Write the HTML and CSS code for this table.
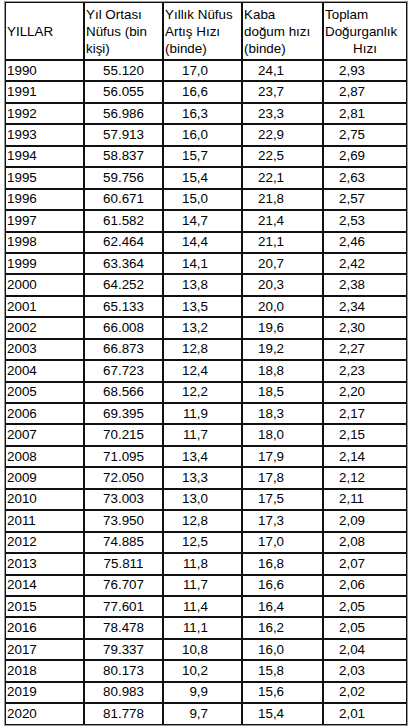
FILE: index.html
```html
<!DOCTYPE html>
<html lang="tr">
<head>
<meta charset="utf-8">
<link rel="stylesheet" href="styles.css">
</head>
<body>
<table class="data">
<colgroup>
<col class="c1"><col class="c2"><col class="c3"><col class="c4"><col class="c5">
</colgroup>
<thead>
<tr class="head">
<td class="h-year">YILLAR</td>
<td class="h-top">Yıl Ortası<br>Nüfus (bin<br>kişi)</td>
<td class="h-top">Yıllık Nüfus<br>Artış Hızı<br>(binde)</td>
<td class="h-top">Kaba<br>doğum hızı<br>(binde)</td>
<td class="h-top">Toplam<br>Doğurganlık<br><span class="center">Hızı</span></td>
</tr>
</thead>
<tbody>
<tr><td class="y">1990</td><td class="pop">55.120</td><td class="gr">17,0</td><td class="cb">24,1</td><td class="tf">2,93</td></tr>
<tr><td class="y">1991</td><td class="pop">56.055</td><td class="gr">16,6</td><td class="cb">23,7</td><td class="tf">2,87</td></tr>
<tr><td class="y">1992</td><td class="pop">56.986</td><td class="gr">16,3</td><td class="cb">23,3</td><td class="tf">2,81</td></tr>
<tr><td class="y">1993</td><td class="pop">57.913</td><td class="gr">16,0</td><td class="cb">22,9</td><td class="tf">2,75</td></tr>
<tr><td class="y">1994</td><td class="pop">58.837</td><td class="gr">15,7</td><td class="cb">22,5</td><td class="tf">2,69</td></tr>
<tr><td class="y">1995</td><td class="pop">59.756</td><td class="gr">15,4</td><td class="cb">22,1</td><td class="tf">2,63</td></tr>
<tr><td class="y">1996</td><td class="pop">60.671</td><td class="gr">15,0</td><td class="cb">21,8</td><td class="tf">2,57</td></tr>
<tr><td class="y">1997</td><td class="pop">61.582</td><td class="gr">14,7</td><td class="cb">21,4</td><td class="tf">2,53</td></tr>
<tr><td class="y">1998</td><td class="pop">62.464</td><td class="gr">14,4</td><td class="cb">21,1</td><td class="tf">2,46</td></tr>
<tr><td class="y">1999</td><td class="pop">63.364</td><td class="gr">14,1</td><td class="cb">20,7</td><td class="tf">2,42</td></tr>
<tr><td class="y">2000</td><td class="pop">64.252</td><td class="gr">13,8</td><td class="cb">20,3</td><td class="tf">2,38</td></tr>
<tr><td class="y">2001</td><td class="pop">65.133</td><td class="gr">13,5</td><td class="cb">20,0</td><td class="tf">2,34</td></tr>
<tr><td class="y">2002</td><td class="pop">66.008</td><td class="gr">13,2</td><td class="cb">19,6</td><td class="tf">2,30</td></tr>
<tr><td class="y">2003</td><td class="pop">66.873</td><td class="gr">12,8</td><td class="cb">19,2</td><td class="tf">2,27</td></tr>
<tr><td class="y">2004</td><td class="pop">67.723</td><td class="gr">12,4</td><td class="cb">18,8</td><td class="tf">2,23</td></tr>
<tr><td class="y">2005</td><td class="pop">68.566</td><td class="gr">12,2</td><td class="cb">18,5</td><td class="tf">2,20</td></tr>
<tr><td class="y">2006</td><td class="pop">69.395</td><td class="gr">11,9</td><td class="cb">18,3</td><td class="tf">2,17</td></tr>
<tr><td class="y">2007</td><td class="pop">70.215</td><td class="gr">11,7</td><td class="cb">18,0</td><td class="tf">2,15</td></tr>
<tr><td class="y">2008</td><td class="pop">71.095</td><td class="gr">13,4</td><td class="cb">17,9</td><td class="tf">2,14</td></tr>
<tr><td class="y">2009</td><td class="pop">72.050</td><td class="gr">13,3</td><td class="cb">17,8</td><td class="tf">2,12</td></tr>
<tr><td class="y">2010</td><td class="pop">73.003</td><td class="gr">13,0</td><td class="cb">17,5</td><td class="tf">2,11</td></tr>
<tr><td class="y">2011</td><td class="pop">73.950</td><td class="gr">12,8</td><td class="cb">17,3</td><td class="tf">2,09</td></tr>
<tr><td class="y">2012</td><td class="pop">74.885</td><td class="gr">12,5</td><td class="cb">17,0</td><td class="tf">2,08</td></tr>
<tr><td class="y">2013</td><td class="pop">75.811</td><td class="gr">11,8</td><td class="cb">16,8</td><td class="tf">2,07</td></tr>
<tr><td class="y">2014</td><td class="pop">76.707</td><td class="gr">11,7</td><td class="cb">16,6</td><td class="tf">2,06</td></tr>
<tr><td class="y">2015</td><td class="pop">77.601</td><td class="gr">11,4</td><td class="cb">16,4</td><td class="tf">2,05</td></tr>
<tr><td class="y">2016</td><td class="pop">78.478</td><td class="gr">11,1</td><td class="cb">16,2</td><td class="tf">2,05</td></tr>
<tr><td class="y">2017</td><td class="pop">79.337</td><td class="gr">10,8</td><td class="cb">16,0</td><td class="tf">2,04</td></tr>
<tr><td class="y">2018</td><td class="pop">80.173</td><td class="gr">10,2</td><td class="cb">15,8</td><td class="tf">2,03</td></tr>
<tr><td class="y">2019</td><td class="pop">80.983</td><td class="gr">9,9</td><td class="cb">15,6</td><td class="tf">2,02</td></tr>
<tr><td class="y">2020</td><td class="pop">81.778</td><td class="gr">9,7</td><td class="cb">15,4</td><td class="tf">2,01</td></tr>
</tbody>
</table>
</body>
</html>
```
FILE: styles.css
```css
html, body {
  margin: 0;
  padding: 0;
  background: #fff;
}
body {
  padding: 1px 0 0 4px;
  font-family: "Liberation Sans", Arial, sans-serif;
  font-size: 13.4px;
  color: #000;
}
.data {
  border-collapse: separate;
  border-spacing: 0;
  table-layout: fixed;
  width: 402px;
  border: 1px solid #9a9a9a;
}
.c1 { width: 79px; }
.c2 { width: 79px; }
.c3 { width: 79px; }
.c4 { width: 81px; }
.c5 { width: 84px; }
.data td {
  border: 1px solid #111;
  padding: 0 1px;
  height: 19.45px;
  line-height: 16px;
  white-space: nowrap;
}
.head td {
  height: 56px;
  vertical-align: middle;
  line-height: 17px;
}
.h-top {
  padding-top: 2px;
}
.center {
  display: block;
  text-align: center;
}
.y { text-align: left; }
.pop { text-align: center; }
.gr { text-align: right; padding-right: 33px !important; }
.cb { text-align: left; padding-left: 15px !important; }
.tf { text-align: left; padding-left: 15px !important; }
```
